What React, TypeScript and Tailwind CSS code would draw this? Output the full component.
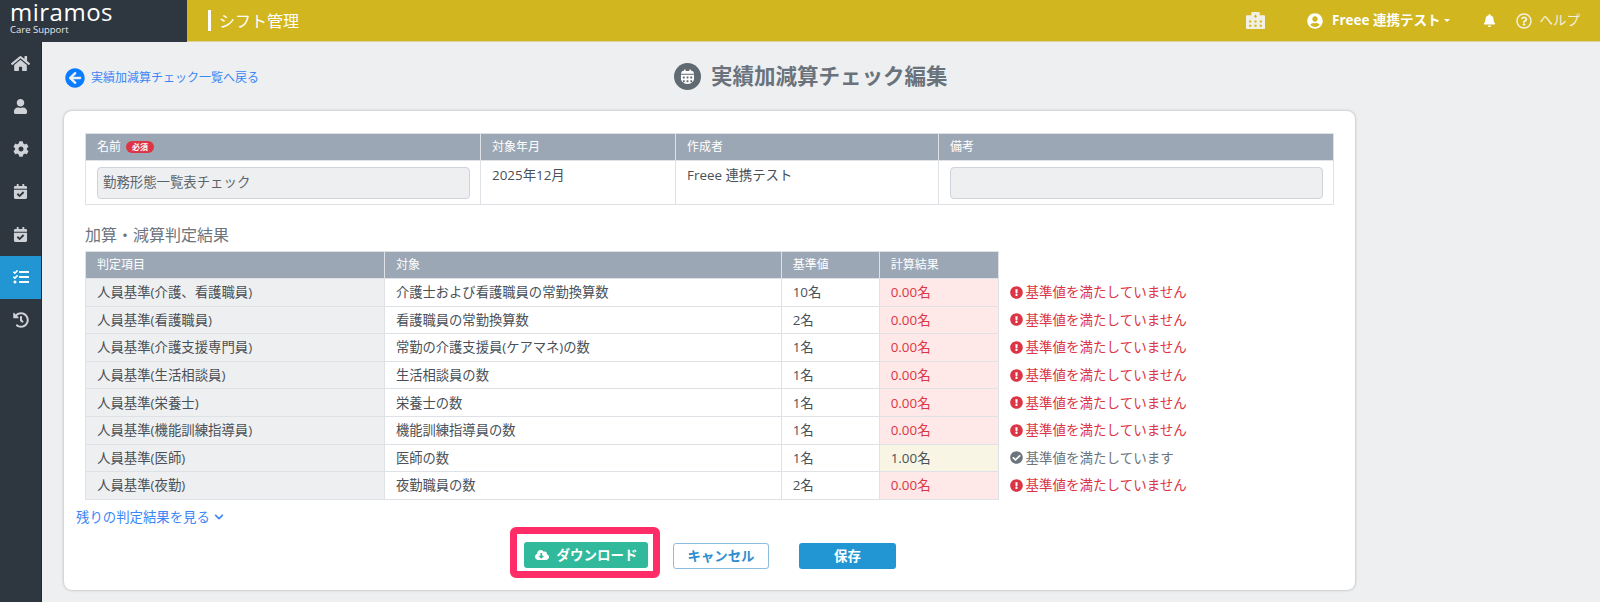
import {
  FaArrowCircleLeft,
  FaBell,
  FaCalendarAlt,
  FaCalendarCheck,
  FaCheckCircle,
  FaChevronDown,
  FaCloudDownloadAlt,
  FaCog,
  FaExclamationCircle,
  FaHistory,
  FaHome,
  FaHospitalAlt,
  FaRegQuestionCircle,
  FaTasks,
  FaUser,
  FaUserCircle,
} from "react-icons/fa"

const rows = [
  { item: "人員基準(介護、看護職員)", target: "介護士および看護職員の常勤換算数", base: "10名", result: "0.00名", ok: false },
  { item: "人員基準(看護職員)", target: "看護職員の常勤換算数", base: "2名", result: "0.00名", ok: false },
  { item: "人員基準(介護支援専門員)", target: "常勤の介護支援員(ケアマネ)の数", base: "1名", result: "0.00名", ok: false },
  { item: "人員基準(生活相談員)", target: "生活相談員の数", base: "1名", result: "0.00名", ok: false },
  { item: "人員基準(栄養士)", target: "栄養士の数", base: "1名", result: "0.00名", ok: false },
  { item: "人員基準(機能訓練指導員)", target: "機能訓練指導員の数", base: "1名", result: "0.00名", ok: false },
  { item: "人員基準(医師)", target: "医師の数", base: "1名", result: "1.00名", ok: true },
  { item: "人員基準(夜勤)", target: "夜勤職員の数", base: "2名", result: "0.00名", ok: false },
]

const navItems = [
  { icon: FaHome, size: 19 },
  { icon: FaUser, size: 15 },
  { icon: FaCog, size: 16 },
  { icon: FaCalendarCheck, size: 15 },
  { icon: FaCalendarCheck, size: 15 },
  { icon: FaTasks, size: 16, active: true },
  { icon: FaHistory, size: 16 },
]

function Header() {
  return (
    <header className="flex h-[42px] text-white">
      <div className="h-full w-[187px] bg-[#2e3640] pl-[10px]">
        <div className="h-[24px] text-2xl font-normal leading-[24px] tracking-[0.5px]">miramos</div>
        <div className="text-[9.5px] leading-[12px] text-[#e5e7eb]">Care Support</div>
      </div>
      <div className="flex flex-1 items-center border-b border-[#dcd3a5] bg-[#d1b61f]">
        <div className="ml-[21px] h-[21px] w-[3px] bg-white" />
        <span className="ml-[8px] text-base">シフト管理</span>
        <FaHospitalAlt size={19} className="ml-[947px] text-[#f1f0e4]" />
        <FaUserCircle size={16} className="ml-[42px]" />
        <span className="ml-[9px] text-[13.5px] font-bold">Freee 連携テスト</span>
        <span className="ml-[3px] h-0 w-0 border-x-[3px] border-t-[3px] border-x-transparent border-t-white" />
        <FaBell size={13} className="ml-[33px]" />
        <FaRegQuestionCircle size={16} className="ml-[20px] text-[#f3f0da]" />
        <span className="ml-[8px] text-[13.5px] text-[#f3f0da]">ヘルプ</span>
      </div>
    </header>
  )
}

function Sidebar() {
  return (
    <nav className="w-[42px] shrink-0 border-r border-[#23292f] bg-[#2e3640]">
      {navItems.map((nav, i) => {
        const Icon = nav.icon
        return (
          <div
            key={i}
            className={
              nav.active
                ? "flex h-[42.8px] items-center justify-center bg-[#2196d3] text-white"
                : "flex h-[42.8px] items-center justify-center text-[#cfd2d6]"
            }
          >
            <Icon size={nav.size} />
          </div>
        )
      })}
    </nav>
  )
}

function InfoTable() {
  return (
    <table className="w-[1249px] table-fixed border-collapse text-[13.4px] text-[#495057]">
      <colgroup>
        <col className="w-[395px]" />
        <col className="w-[195px]" />
        <col className="w-[263px]" />
        <col />
      </colgroup>
      <thead>
        <tr className="h-[27px] bg-[#9ca7b5] text-left text-xs font-normal text-white">
          <th className="border border-[#dee2e6] pl-[11px] font-normal">
            名前
            <span className="ml-[5px] inline-block rounded-full bg-[#dc3545] px-[6px] align-[1px] text-[8px] font-bold leading-[12px]">必須</span>
          </th>
          <th className="border border-[#dee2e6] pl-[11px] font-normal">対象年月</th>
          <th className="border border-[#dee2e6] pl-[11px] font-normal">作成者</th>
          <th className="border border-[#dee2e6] pl-[11px] font-normal">備考</th>
        </tr>
      </thead>
      <tbody>
        <tr className="h-[44px]">
          <td className="border border-[#dee2e6] px-[11px]">
            <div className="flex h-[32px] w-[373px] items-center rounded-[4px] border border-[#ced4da] bg-[#eeeff1] px-[5px] text-[#5c646b]">
              勤務形態一覧表チェック
            </div>
          </td>
          <td className="border border-[#dee2e6] pl-[11px] align-top pt-[4px]">2025年12月</td>
          <td className="border border-[#dee2e6] pl-[11px] align-top pt-[4px]">Freee 連携テスト</td>
          <td className="border border-[#dee2e6] px-[11px]">
            <div className="h-[32px] w-[373px] rounded-[4px] border border-[#ced4da] bg-[#eeeff1]" />
          </td>
        </tr>
      </tbody>
    </table>
  )
}

function ResultTable() {
  return (
    <table className="table-fixed border-collapse text-[13.4px] leading-[18px] text-[#495057]">
      <colgroup>
        <col className="w-[299px]" />
        <col className="w-[397px]" />
        <col className="w-[98px]" />
        <col className="w-[119px]" />
        <col className="w-[336px]" />
      </colgroup>
      <thead>
        <tr className="h-[27px] text-left text-xs text-white">
          <th className="border border-[#dee2e6] bg-[#9ca7b5] pl-[11px] font-normal">判定項目</th>
          <th className="border border-[#dee2e6] bg-[#9ca7b5] pl-[11px] font-normal">対象</th>
          <th className="border border-[#dee2e6] bg-[#9ca7b5] pl-[11px] font-normal">基準値</th>
          <th className="border border-[#dee2e6] bg-[#9ca7b5] pl-[11px] font-normal">計算結果</th>
          <th />
        </tr>
      </thead>
      <tbody>
        {rows.map((row) => (
          <tr key={row.item} className="h-[27.6px]">
            <td className="border border-[#dee2e6] bg-[#eeeff1] pl-[11px]">{row.item}</td>
            <td className="border border-[#dee2e6] pl-[11px] text-[13.3px]">{row.target}</td>
            <td className="border border-[#dee2e6] pl-[11px]">{row.base}</td>
            <td
              className={
                row.ok
                  ? "border border-[#dee2e6] bg-[#f8f5e4] pl-[11px]"
                  : "border border-[#dee2e6] bg-[#fee8e8] pl-[11px] text-[#dc3545]"
              }
            >
              {row.result}
            </td>
            <td className="pl-[11px] text-[13.5px]">
              {row.ok ? (
                <span className="flex items-center gap-[3px] text-[#6c757d]">
                  <FaCheckCircle size={13} />
                  基準値を満たしています
                </span>
              ) : (
                <span className="flex items-center gap-[3px] text-[#dc3545]">
                  <FaExclamationCircle size={13} />
                  基準値を満たしていません
                </span>
              )}
            </td>
          </tr>
        ))}
      </tbody>
    </table>
  )
}

export default function App() {
  return (
    <div className="h-[602px] w-[1600px] overflow-hidden bg-[#eeeff1] font-['Open_Sans','Noto_Sans_CJK_JP',sans-serif]">
      <Header />
      <div className="flex h-[560px]">
        <Sidebar />
        <main className="flex-1 pl-[22px]">
          <div className="flex h-[69px] items-center">
            <a className="mt-[2px] flex w-[610px] items-center gap-[6px] pl-[1px] text-xs text-[#3b86f5]">
              <FaArrowCircleLeft size={20} className="text-[#0a7cff]" />
              実績加減算チェック一覧へ戻る
            </a>
            <FaCalendarAlt size={27} className="rounded-full bg-[#5f6a72] p-[6px] text-white" />
            <h1 className="ml-[10px] text-[21.5px] font-bold text-[#6a737b]">実績加減算チェック編集</h1>
          </div>

          <div className="h-[479px] w-[1291px] rounded-lg bg-white px-[21px] pt-[22px] shadow-[0_0_3px_rgba(0,0,0,0.3)]">
            <InfoTable />
            <h2 className="mt-[18px] h-[28px] text-base leading-[25px] text-[#6c757d]">加算・減算判定結果</h2>
            <ResultTable />
            <a className="-ml-[9px] mt-[8px] flex h-[19px] items-center gap-[4px] text-[13.4px] text-[#3b86f5]">
              残りの判定結果を見る
              <FaChevronDown size={10} />
            </a>
            <div className="ml-[425px] flex items-start">
              <div className="rounded-md border-[7px] border-[#ff2c68] pb-[3px] pl-[7px] pr-[5px] pt-[8px]">
                <button className="flex h-[26px] w-[124px] items-center justify-center gap-[8px] rounded-[3px] bg-[#30b99b] text-[13.5px] font-bold text-white">
                  <FaCloudDownloadAlt size={14} />
                  ダウンロード
                </button>
              </div>
              <button className="ml-[13px] mt-[16px] h-[26px] w-[96px] rounded-[3px] border border-[#8dbde0] bg-white text-[13.4px] font-bold text-[#2f8fd0]">
                キャンセル
              </button>
              <button className="ml-[30px] mt-[16px] h-[26px] w-[97px] rounded-[3px] bg-[#2196d3] text-[13.4px] font-bold text-white">
                保存
              </button>
            </div>
          </div>
        </main>
      </div>
    </div>
  )
}
